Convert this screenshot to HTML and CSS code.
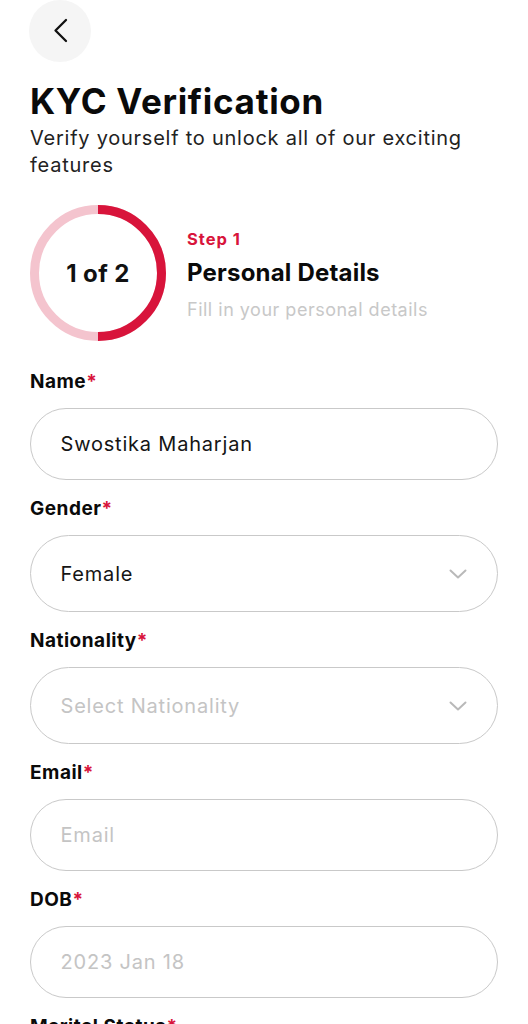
FILE: index.html
```html
<!DOCTYPE html>
<html lang="en">
<head>
<meta charset="utf-8">
<title>KYC Verification</title>
<link rel="stylesheet" href="styles.css">
</head>
<body>
<main class="page">
  <button class="back" type="button" aria-label="Back">
    <svg width="62" height="62" viewBox="0 0 62 62"><path d="M37 20 L26.5 30.5 L37 41" fill="none" stroke="#111" stroke-width="2.3" stroke-linecap="round" stroke-linejoin="round"/></svg>
  </button>

  <h1 class="title">KYC Verification</h1>
  <p class="subtitle">Verify yourself to unlock all of our exciting features</p>

  <section class="progress">
    <div class="ring">
      <svg width="136" height="136" viewBox="0 0 136 136">
        <circle cx="68" cy="68" r="63.5" fill="none" stroke="#f4c4ce" stroke-width="9"/>
        <path d="M68 4.5 A63.5 63.5 0 0 1 68 131.5" fill="none" stroke="#d8143b" stroke-width="9"/>
      </svg>
      <span class="ring-label">1 of 2</span>
    </div>
    <div class="step">
      <div class="step-num">Step 1</div>
      <div class="step-title">Personal Details</div>
      <div class="step-desc">Fill in your personal details</div>
    </div>
  </section>

  <form class="form">
    <div class="field">
      <label class="label">Name<span class="req">*</span></label>
      <div class="input"><span class="value">Swostika Maharjan</span></div>
    </div>
    <div class="field">
      <label class="label">Gender<span class="req">*</span></label>
      <div class="input select"><span class="value">Female</span>
        <svg class="chev" width="18" height="10" viewBox="0 0 18 10"><path d="M1.5 1.5 L9 8.5 L16.5 1.5" fill="none" stroke="#b9b9b9" stroke-width="2" stroke-linecap="round" stroke-linejoin="round"/></svg>
      </div>
    </div>
    <div class="field">
      <label class="label">Nationality<span class="req">*</span></label>
      <div class="input select"><span class="placeholder">Select Nationality</span>
        <svg class="chev" width="18" height="10" viewBox="0 0 18 10"><path d="M1.5 1.5 L9 8.5 L16.5 1.5" fill="none" stroke="#b9b9b9" stroke-width="2" stroke-linecap="round" stroke-linejoin="round"/></svg>
      </div>
    </div>
    <div class="field">
      <label class="label">Email<span class="req">*</span></label>
      <div class="input"><span class="placeholder">Email</span></div>
    </div>
    <div class="field">
      <label class="label">DOB<span class="req">*</span></label>
      <div class="input"><span class="placeholder">2023 Jan 18</span></div>
    </div>
    <div class="field">
      <label class="label">Marital Status<span class="req">*</span></label>
      <div class="input select"><span class="placeholder">Select Marital Status</span></div>
    </div>
  </form>
</main>
</body>
</html>
```

FILE: styles.css
```css
* { box-sizing: border-box; }
html, body { margin: 0; padding: 0; background: #fff; }
body {
  font-family: Inter, "Noto Sans", "Liberation Sans", sans-serif;
  color: #111;
  width: 528px;
  overflow: hidden;
}
.page {
  padding: 0 30px;
  display: flex;
  flex-direction: column;
}
.back {
  width: 62px;
  height: 62px;
  border-radius: 50%;
  background: #f5f5f5;
  border: 0;
  padding: 0;
  margin: 0 0 0 -1px;
  display: block;
}
.back svg { display: block; }
.title {
  margin: 19px 0 0;
  font-size: 35px;
  line-height: 40px;
  font-weight: 700;
  letter-spacing: 0.7px;
  color: #0a0a0a;
}
.subtitle {
  margin: 4px 0 0;
  font-size: 20px;
  line-height: 27px;
  letter-spacing: 0.75px;
  color: #222;
}
.progress {
  margin-top: 26px;
  display: flex;
  align-items: center;
  gap: 21px;
}
.ring {
  position: relative;
  width: 136px;
  height: 136px;
  flex: none;
}
.ring svg { display: block; }
.ring-label {
  position: absolute;
  inset: 0;
  display: flex;
  align-items: center;
  justify-content: center;
  font-size: 24px;
  font-weight: 700;
  letter-spacing: 0.4px;
  color: #111;
}
.step { display: flex; flex-direction: column; margin-top: 5px; }
.step-num {
  font-size: 16.5px;
  line-height: 20px;
  font-weight: 700;
  color: #d8143b;
  letter-spacing: 1px;
}
.step-title {
  margin-top: 9px;
  font-size: 24px;
  line-height: 29px;
  font-weight: 700;
  letter-spacing: 0.2px;
  color: #0a0a0a;
}
.step-desc {
  margin-top: 11px;
  font-size: 18px;
  line-height: 24px;
  color: #c8c8c8;
  letter-spacing: 0.5px;
}
.form {
  margin-top: 30px;
  display: flex;
  flex-direction: column;
  gap: 18px;
}
.field { display: flex; flex-direction: column; gap: 15px; }
.label {
  font-size: 19px;
  line-height: 22px;
  font-weight: 700;
  letter-spacing: 0.5px;
  color: #0a0a0a;
}
.req { color: #d8143b; }
.input {
  height: 72px;
  border: 1.5px solid #c9c9c9;
  border-radius: 40px;
  padding: 0 30px 0 29.5px;
  display: flex;
  align-items: center;
  justify-content: space-between;
  font-size: 20px;
  letter-spacing: 0.8px;
}
.input.select { height: 77px; }
.value { color: #151515; }
.placeholder { color: #c4c4c4; }
.chev { display: block; flex: none; }
```
